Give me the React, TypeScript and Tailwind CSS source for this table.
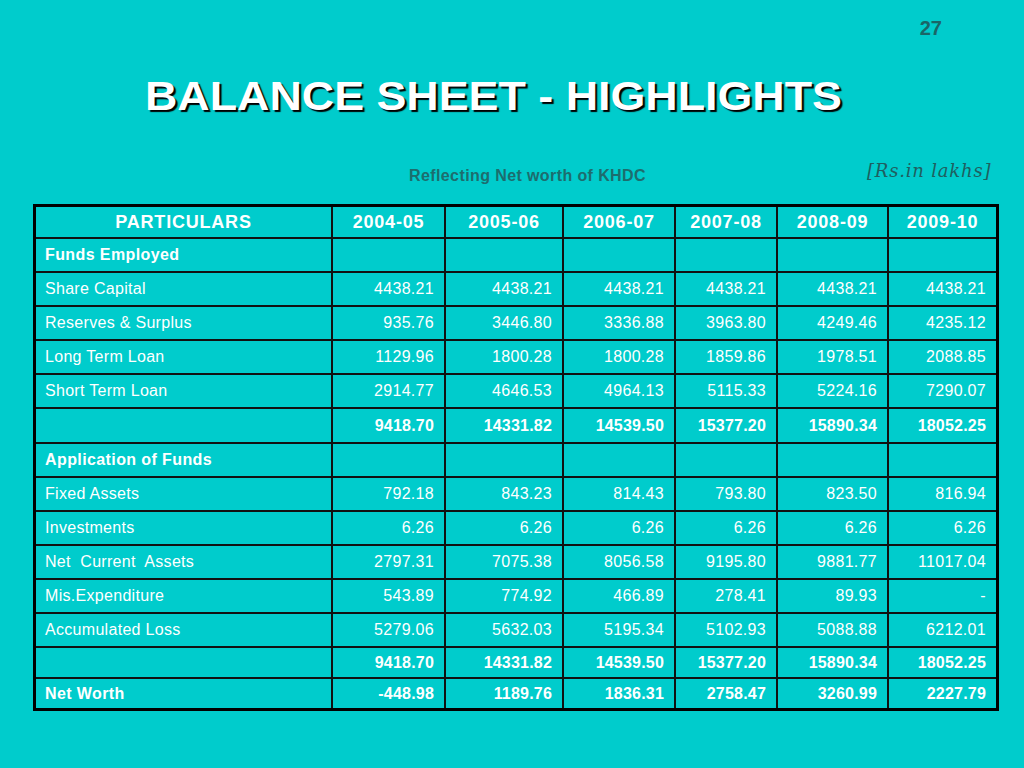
import React from "react";

type Row = {
  label: string;
  values: string[];
  bold?: boolean;
  h: string;
};

const rows: Row[] = [
  { label: "Funds Employed", values: ["", "", "", "", "", ""], bold: true, h: "h-[34px]" },
  { label: "Share Capital", values: ["4438.21", "4438.21", "4438.21", "4438.21", "4438.21", "4438.21"], h: "h-[34px]" },
  { label: "Reserves & Surplus", values: ["935.76", "3446.80", "3336.88", "3963.80", "4249.46", "4235.12"], h: "h-[34px]" },
  { label: "Long Term Loan", values: ["1129.96", "1800.28", "1800.28", "1859.86", "1978.51", "2088.85"], h: "h-[34px]" },
  { label: "Short Term Loan", values: ["2914.77", "4646.53", "4964.13", "5115.33", "5224.16", "7290.07"], h: "h-[34px]" },
  { label: "", values: ["9418.70", "14331.82", "14539.50", "15377.20", "15890.34", "18052.25"], bold: true, h: "h-[35px]" },
  { label: "Application of Funds", values: ["", "", "", "", "", ""], bold: true, h: "h-[34px]" },
  { label: "Fixed Assets", values: ["792.18", "843.23", "814.43", "793.80", "823.50", "816.94"], h: "h-[34px]" },
  { label: "Investments", values: ["6.26", "6.26", "6.26", "6.26", "6.26", "6.26"], h: "h-[34px]" },
  { label: "Net  Current  Assets", values: ["2797.31", "7075.38", "8056.58", "9195.80", "9881.77", "11017.04"], h: "h-[34px]" },
  { label: "Mis.Expenditure", values: ["543.89", "774.92", "466.89", "278.41", "89.93", "-"], h: "h-[34px]" },
  { label: "Accumulated Loss", values: ["5279.06", "5632.03", "5195.34", "5102.93", "5088.88", "6212.01"], h: "h-[34px]" },
  { label: "", values: ["9418.70", "14331.82", "14539.50", "15377.20", "15890.34", "18052.25"], bold: true, h: "h-[31px]" },
  { label: "Net Worth", values: ["-448.98", "1189.76", "1836.31", "2758.47", "3260.99", "2227.79"], bold: true, h: "h-[29px]" },
];

const years = ["2004-05", "2005-06", "2006-07", "2007-08", "2008-09", "2009-10"];

export default function App() {
  return (
    <div
      className="w-[1024px] h-[768px] bg-[#00cccc] overflow-hidden flex flex-col"
      style={{ fontFamily: '"Liberation Sans", Arial, sans-serif' }}
    >
      <div className="h-[16px]" />
      <div className="flex justify-end pr-[82px] h-[24px] items-center">
        <span className="text-[20px] font-bold text-[#1a6667] leading-none">27</span>
      </div>
      <div className="h-[36px]" />
      <div className="pl-[145px] h-[40px] flex items-center">
        <h1 className="inline-block origin-left scale-x-[1.12] text-[40px] font-bold text-white leading-none [text-shadow:2px_2px_1px_#000] whitespace-nowrap">
          BALANCE SHEET - HIGHLIGHTS
        </h1>
      </div>
      <div className="h-[40px]" />
      <div className="flex items-end h-[34px] pb-[6px]">
        <span className="ml-[409px] text-[16px] font-bold text-[#1d6d6e] tracking-[0.4px] leading-none">
          Reflecting Net worth of KHDC
        </span>
        <span
          className="ml-[221px] mb-[4px] text-[18px] italic text-[#1f5f60] tracking-[0.8px] leading-none"
          style={{ fontFamily: '"DejaVu Serif", "Liberation Serif", serif' }}
        >
          [Rs.in lakhs]
        </span>
      </div>
      <div className="h-[14px]" />
      <div className="ml-[33px] w-[966px] border-[3px] border-black">
        <div className="grid grid-cols-[297px_113px_118px_112px_102px_111px_107px] text-white">
          <div className="h-[32px] border-r-2 border-b-2 border-[#111] flex items-center justify-center text-[18px] font-bold tracking-[0.8px]">
            PARTICULARS
          </div>
          {years.map((y, i) => (
            <div
              key={y}
              className={
                "h-[32px] border-b-2 border-[#111] flex items-center justify-center text-[18px] font-bold tracking-[0.8px] " +
                (i < 5 ? "border-r-2" : "")
              }
            >
              {y}
            </div>
          ))}
          {rows.map((r, ri) => {
            const last = ri === rows.length - 1;
            return (
              <React.Fragment key={ri}>
                <div
                  className={
                    r.h +
                    " border-r-2 border-[#111] flex items-center pl-[9px] whitespace-pre " +
                    (last ? "" : "border-b-2 ") +
                    (r.bold ? "font-bold text-[16px] tracking-[0.4px]" : "text-[16px] tracking-[0.3px]")
                  }
                >
                  {r.label}
                </div>
                {r.values.map((v, ci) => (
                  <div
                    key={ci}
                    className={
                      r.h +
                      " border-[#111] flex items-center justify-end pr-[10px] " +
                      (ci < 5 ? "border-r-2 " : "") +
                      (last ? "" : "border-b-2 ") +
                      (r.bold ? "font-bold text-[16px] tracking-[0.2px]" : "text-[16px] tracking-[0.3px]")
                    }
                  >
                    {v}
                  </div>
                ))}
              </React.Fragment>
            );
          })}
        </div>
      </div>
    </div>
  );
}
